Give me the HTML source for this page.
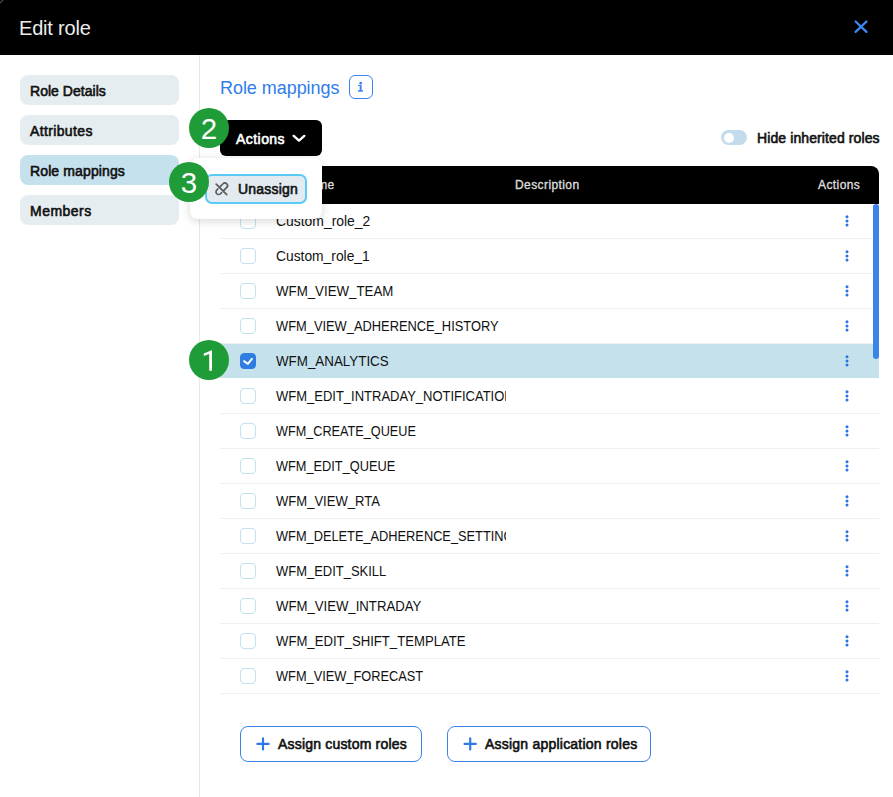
<!DOCTYPE html>
<html><head><meta charset="utf-8">
<style>
*{box-sizing:border-box;margin:0;padding:0}
html,body{width:893px;height:797px;overflow:hidden;background:#fff;font-family:"Liberation Sans",sans-serif;color:#111}
.hdr{position:absolute;left:0;top:0;width:893px;height:55px;background:#000}
.hdr .t{position:absolute;left:19px;top:16px;font-size:20px;color:#ececec;line-height:24px;letter-spacing:-0.2px}
.side{position:absolute;left:199px;top:55px;width:1px;height:742px;background:#e8e8e8}
.nav{position:absolute;left:20px;width:159px;height:30px;border-radius:8px;background:#e6edf0;font-size:14px;-webkit-text-stroke:0.6px #111;line-height:32px;padding-left:10px;color:#111}
.nav.act{background:#c6e1ee}
.title{position:absolute;left:220px;top:76px;font-size:18px;color:#2f7ceb;line-height:24px;letter-spacing:-0.05px}
.info{position:absolute;left:349px;top:75px;width:24px;height:24px;border:1.5px solid #3b82f0;border-radius:6px}
.actbtn{position:absolute;left:220px;top:120px;width:102px;height:36px;background:#000;border-radius:6px;color:#fff;font-size:14px;-webkit-text-stroke:0.6px #fff;line-height:38px;padding-left:16px;letter-spacing:0.45px}
.toggle{position:absolute;left:721px;top:130px;width:26px;height:15px;border-radius:8px;background:#c3dceb}
.toggle:after{content:"";position:absolute;left:3px;top:2.5px;width:10px;height:10px;border-radius:50%;background:#fff}
.hide{position:absolute;left:757px;top:129px;font-size:14px;-webkit-text-stroke:0.6px #111;line-height:18px;letter-spacing:0.1px}
.thead{position:absolute;left:220px;top:166px;width:659px;height:38px;background:#000;border-radius:8px 8px 0 0;color:#ddd;font-size:12px;-webkit-text-stroke:0.35px #ddd}
.thead span{position:absolute;top:12px;line-height:14px}
.row{position:absolute;left:220px;width:659px;height:35px;border-bottom:1px solid #efefef}
.row.sel{background:#c5e1ec;border-bottom-color:#fff}
.cb{position:absolute;left:20px;top:9px;width:16px;height:16px;border:1px solid #c2e2ee;border-radius:4px;background:#fff}
.row.sel .cb{background:#2f7de1;border-color:#2f7de1}
.nm{position:absolute;left:56px;top:9px;width:230px;overflow:hidden;white-space:nowrap;font-size:14px;line-height:17px;color:#111}
.nm span{display:inline-block;transform-origin:0 0}
.keb{position:absolute;left:624px;top:10px;fill:#2a74e0}
.sb{position:absolute;left:873px;top:204px;width:6px;height:155px;border-radius:3px;background:#3a84ea}
.btn{position:absolute;top:726px;height:36px;border:1px solid #3b82e8;border-radius:8px;font-size:14px;-webkit-text-stroke:0.6px #111;line-height:34px;color:#111;letter-spacing:0.19px}
.btn span{position:absolute;left:37px;top:0}
.popup{position:absolute;left:190px;top:158px;width:132px;height:61px;background:#fff;border-radius:8px;box-shadow:0 2px 10px rgba(0,0,0,.16)}
.unas{position:absolute;left:15px;top:16px;width:102px;height:30px;background:#e3ebf0;border:2px solid #5ccaf7;border-radius:7px;font-size:14px;-webkit-text-stroke:0.6px #111;line-height:26px;letter-spacing:0.22px}
.unas span{position:absolute;left:31px;top:0}
.badge{position:absolute;width:40px;height:40px;border-radius:50%;background:#1f9b37;color:#fff;font-size:29.5px;text-align:center;line-height:42px}
</style></head><body>
<div class="hdr"><div class="t">Edit role</div></div>
<svg style="position:absolute;left:0;top:0" width="5" height="5" viewBox="0 0 5 5"><path d="M0.4 3.2Q0.9 0.9 3.2 0.4" stroke="#777" stroke-width="0.9" fill="none"/></svg>
<div class="side"></div>
<div class="nav" style="top:75px;letter-spacing:0.03px">Role Details</div>
<div class="nav" style="top:115px;letter-spacing:0.36px">Attributes</div>
<div class="nav act" style="top:155px;letter-spacing:0.12px">Role mappings</div>
<div class="nav" style="top:195px;letter-spacing:0.47px">Members</div>

<div class="title">Role mappings</div>
<div class="info"></div>
<div class="actbtn">Actions</div>
<div class="toggle"></div>
<div class="hide">Hide inherited roles</div>

<div class="thead"><span style="left:81px;letter-spacing:0.4px">Name</span><span style="left:295px;letter-spacing:0.41px">Description</span><span style="left:598px;letter-spacing:0.42px">Actions</span></div>
<div id="rows"><div class="row" style="top:204px"><div class="cb"></div><div class="nm"><span style="transform:scaleX(0.993)">Custom_role_2</span></div><svg class="keb" width="6" height="14" viewBox="0 0 6 14"><circle cx="3" cy="2.8" r="1.5"/><circle cx="3" cy="7" r="1.5"/><circle cx="3" cy="11.1" r="1.5"/></svg></div>
<div class="row" style="top:239px"><div class="cb"></div><div class="nm"><span style="transform:scaleX(0.987)">Custom_role_1</span></div><svg class="keb" width="6" height="14" viewBox="0 0 6 14"><circle cx="3" cy="2.8" r="1.5"/><circle cx="3" cy="7" r="1.5"/><circle cx="3" cy="11.1" r="1.5"/></svg></div>
<div class="row" style="top:274px"><div class="cb"></div><div class="nm"><span style="transform:scaleX(0.949)">WFM_VIEW_TEAM</span></div><svg class="keb" width="6" height="14" viewBox="0 0 6 14"><circle cx="3" cy="2.8" r="1.5"/><circle cx="3" cy="7" r="1.5"/><circle cx="3" cy="11.1" r="1.5"/></svg></div>
<div class="row" style="top:309px"><div class="cb"></div><div class="nm"><span style="transform:scaleX(0.919)">WFM_VIEW_ADHERENCE_HISTORY</span></div><svg class="keb" width="6" height="14" viewBox="0 0 6 14"><circle cx="3" cy="2.8" r="1.5"/><circle cx="3" cy="7" r="1.5"/><circle cx="3" cy="11.1" r="1.5"/></svg></div>
<div class="row sel" style="top:344px"><div class="cb"><svg width="16" height="16" viewBox="0 0 16 16" style="position:absolute;left:-1px;top:-1px"><path d="M4 8.2L7.85 10.8L11.9 5.9" stroke="#fff" stroke-width="2" fill="none" stroke-linecap="round" stroke-linejoin="round"/></svg></div><div class="nm"><span style="transform:scaleX(0.955)">WFM_ANALYTICS</span></div><svg class="keb" width="6" height="14" viewBox="0 0 6 14"><circle cx="3" cy="2.8" r="1.5"/><circle cx="3" cy="7" r="1.5"/><circle cx="3" cy="11.1" r="1.5"/></svg></div>
<div class="row" style="top:379px"><div class="cb"></div><div class="nm"><span style="transform:scaleX(0.928)">WFM_EDIT_INTRADAY_NOTIFICATIONS</span></div><svg class="keb" width="6" height="14" viewBox="0 0 6 14"><circle cx="3" cy="2.8" r="1.5"/><circle cx="3" cy="7" r="1.5"/><circle cx="3" cy="11.1" r="1.5"/></svg></div>
<div class="row" style="top:414px"><div class="cb"></div><div class="nm"><span style="transform:scaleX(0.905)">WFM_CREATE_QUEUE</span></div><svg class="keb" width="6" height="14" viewBox="0 0 6 14"><circle cx="3" cy="2.8" r="1.5"/><circle cx="3" cy="7" r="1.5"/><circle cx="3" cy="11.1" r="1.5"/></svg></div>
<div class="row" style="top:449px"><div class="cb"></div><div class="nm"><span style="transform:scaleX(0.912)">WFM_EDIT_QUEUE</span></div><svg class="keb" width="6" height="14" viewBox="0 0 6 14"><circle cx="3" cy="2.8" r="1.5"/><circle cx="3" cy="7" r="1.5"/><circle cx="3" cy="11.1" r="1.5"/></svg></div>
<div class="row" style="top:484px"><div class="cb"></div><div class="nm"><span style="transform:scaleX(0.932)">WFM_VIEW_RTA</span></div><svg class="keb" width="6" height="14" viewBox="0 0 6 14"><circle cx="3" cy="2.8" r="1.5"/><circle cx="3" cy="7" r="1.5"/><circle cx="3" cy="11.1" r="1.5"/></svg></div>
<div class="row" style="top:519px"><div class="cb"></div><div class="nm"><span style="transform:scaleX(0.914)">WFM_DELETE_ADHERENCE_SETTINGS</span></div><svg class="keb" width="6" height="14" viewBox="0 0 6 14"><circle cx="3" cy="2.8" r="1.5"/><circle cx="3" cy="7" r="1.5"/><circle cx="3" cy="11.1" r="1.5"/></svg></div>
<div class="row" style="top:554px"><div class="cb"></div><div class="nm"><span style="transform:scaleX(0.926)">WFM_EDIT_SKILL</span></div><svg class="keb" width="6" height="14" viewBox="0 0 6 14"><circle cx="3" cy="2.8" r="1.5"/><circle cx="3" cy="7" r="1.5"/><circle cx="3" cy="11.1" r="1.5"/></svg></div>
<div class="row" style="top:589px"><div class="cb"></div><div class="nm"><span style="transform:scaleX(0.94)">WFM_VIEW_INTRADAY</span></div><svg class="keb" width="6" height="14" viewBox="0 0 6 14"><circle cx="3" cy="2.8" r="1.5"/><circle cx="3" cy="7" r="1.5"/><circle cx="3" cy="11.1" r="1.5"/></svg></div>
<div class="row" style="top:624px"><div class="cb"></div><div class="nm"><span style="transform:scaleX(0.9385)">WFM_EDIT_SHIFT_TEMPLATE</span></div><svg class="keb" width="6" height="14" viewBox="0 0 6 14"><circle cx="3" cy="2.8" r="1.5"/><circle cx="3" cy="7" r="1.5"/><circle cx="3" cy="11.1" r="1.5"/></svg></div>
<div class="row" style="top:659px"><div class="cb"></div><div class="nm"><span style="transform:scaleX(0.914)">WFM_VIEW_FORECAST</span></div><svg class="keb" width="6" height="14" viewBox="0 0 6 14"><circle cx="3" cy="2.8" r="1.5"/><circle cx="3" cy="7" r="1.5"/><circle cx="3" cy="11.1" r="1.5"/></svg></div></div>
<div class="sb"></div>

<div class="btn" style="left:240px;width:182px"><span>Assign custom roles</span></div>
<div class="btn" style="left:447px;width:204px"><span style="letter-spacing:0.22px">Assign application roles</span></div>

<svg style="position:absolute;left:0;top:0" width="893" height="797" viewBox="0 0 893 797">
<path d="M855.6 21.5L866.5 31.9M866.5 21.5L855.6 31.9" stroke="#3d8af7" stroke-width="2.2" stroke-linecap="round"/>
<circle cx="360.7" cy="83.2" r="1.35" fill="#3b82f0"/>
<path d="M358 84.9H361.6V90.3H363V91.7H358V90.3H359.7V86H358Z" fill="#3b82f0"/>
<path d="M293.7 135.9L299 140.6L304.3 135.9" stroke="#fff" stroke-width="2.4" fill="none" stroke-linecap="round" stroke-linejoin="round"/>
<path d="M257.4 743.9H268.6M263 738.3V749.5" stroke="#2d7ae6" stroke-width="2.2" stroke-linecap="round"/>
<path d="M464.6 743.9H475.8M470.2 738.3V749.5" stroke="#2d7ae6" stroke-width="2.2" stroke-linecap="round"/>
</svg>
<div class="popup"><div class="unas"><span>Unassign</span></div></div>
<svg style="position:absolute;left:0;top:0" width="893" height="797" viewBox="0 0 893 797">
<g stroke="#5c5c5c" stroke-width="1.7" fill="none" stroke-linecap="round">
<path d="M216.2 184.2L226.7 194.7"/>
<path d="M219.4 187.4L223.06 183.76A2.6 2.6 0 0 1 226.74 187.44L223.6 190.6"/>
<path d="M217.9 188.9L216.76 190.06A2.6 2.6 0 0 0 220.44 193.74L221.6 192.6"/>
</g></svg>
<div class="badge" style="left:189px;top:108px">2</div>
<div class="badge" style="left:169px;top:162px">3</div>
<div class="badge" style="left:189px;top:340px"></div>
<svg style="position:absolute;left:0;top:0" width="893" height="797" viewBox="0 0 893 797"><path d="M212 350.2V370.8H209.2V353.9L203.8 355.9V353.5L211.6 350.2Z" fill="#fff"/></svg>
</body></html>
